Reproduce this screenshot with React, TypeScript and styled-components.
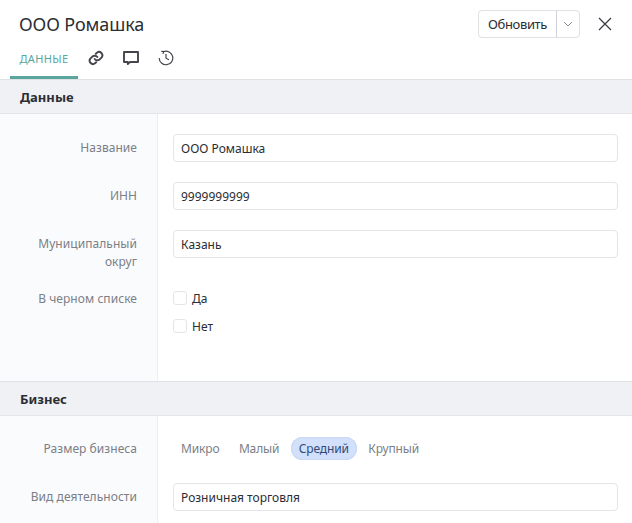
import styled, { createGlobalStyle } from "styled-components"

const Global = createGlobalStyle`
  html, body {
    margin: 0;
    padding: 0;
    background: #fff;
    overflow: hidden;
    font-family: "Noto Sans", sans-serif;
    font-size: 13px;
    color: #2b2d33;
  }
`

const Page = styled.div`
  width: 632px;
  height: 523px;
  overflow: hidden;
`

const Header = styled.header`
  height: 79px;
  display: flex;
  flex-direction: column;
  border-bottom: 1px solid #dfe1e5;
`

const TitleRow = styled.div`
  height: 44px;
  padding: 4px 20px 0 20px;
  box-sizing: border-box;
  display: flex;
  align-items: center;
  justify-content: space-between;
`

const Title = styled.h1`
  margin: 0 0 0 -1px;
  font-size: 18px;
  font-weight: 400;
  letter-spacing: -0.1px;
  color: #2b2d33;
`

const Actions = styled.div`
  display: flex;
  align-items: center;
  gap: 18px;
`

const SplitButton = styled.div`
  display: flex;
  height: 28px;
  border: 1px solid #dfe1e5;
  border-radius: 4px;
  box-sizing: border-box;
`

const MainButton = styled.div`
  width: 77px;
  display: flex;
  align-items: center;
  justify-content: center;
  font-size: 13px;
  letter-spacing: -0.35px;
  color: #2b2d33;
  border-right: 1px solid #cfd2d6;
`

const CaretButton = styled.div`
  width: 22px;
  display: flex;
  align-items: center;
  justify-content: center;
`

const Tabs = styled.nav`
  flex: 1;
  display: flex;
  align-items: flex-start;
`

const TextTab = styled.div`
  width: 68px;
  height: 35px;
  margin-left: 10px;
  padding-bottom: 4px;
  border-bottom: 3px solid #5aa69f;
  box-sizing: border-box;
  display: flex;
  align-items: center;
  justify-content: center;
  font-size: 11px;
  letter-spacing: 0.4px;
  color: #5aa69f;
`

const IconTab = styled.div`
  width: 35px;
  height: 28px;
  display: flex;
  align-items: center;
  justify-content: center;
  color: #44464c;
`

const SectionHeader = styled.h2<{ $ruled?: boolean }>`
  margin: 0;
  height: ${(p) => (p.$ruled ? 35 : 34)}px;
  padding-left: 20px;
  display: flex;
  align-items: center;
  background: #f0f1f5;
  border-top: ${(p) => (p.$ruled ? "1px solid #dfe1e5" : "none")};
  border-bottom: 1px solid #e3e5e9;
  box-sizing: border-box;
  font-size: 13px;
  font-weight: 700;
  color: #2b2d33;
`

const Section = styled.section<{ $height: number }>`
  height: ${(p) => p.$height}px;
  display: grid;
  grid-template-columns: 158px 1fr;
  overflow: hidden;
`

const Labels = styled.div<{ $top: number }>`
  background: #fafbfd;
  border-right: 1px solid #eceef1;
  padding-top: ${(p) => p.$top}px;
  box-sizing: border-box;
`

const Fields = styled.div<{ $top: number }>`
  padding: ${(p) => p.$top}px 14px 0 15px;
  box-sizing: border-box;
`

const Label = styled.div<{ $height: number }>`
  height: ${(p) => p.$height}px;
  padding-right: 20px;
  text-align: right;
  font-size: 12px;
  line-height: 18px;
  letter-spacing: 0.05px;
  color: #7b7f86;
`

const Input = styled.div<{ $mb?: number }>`
  height: 28px;
  margin-bottom: ${(p) => p.$mb ?? 20}px;
  padding-left: 7px;
  display: flex;
  align-items: center;
  border: 1px solid #e3e5e9;
  border-radius: 4px;
  box-sizing: border-box;
  font-size: 12px;
  color: #2b2d33;
`

const CheckRow = styled.div`
  height: 14px;
  margin-bottom: 14px;
  display: flex;
  align-items: center;
  gap: 5px;
  font-size: 12px;
  color: #2b2d33;
`

const Box = styled.span`
  width: 14px;
  height: 14px;
  border: 1px solid #e3e5e9;
  border-radius: 3px;
  box-sizing: border-box;
`

const Segments = styled.div`
  height: 24px;
  margin-bottom: 23px;
  display: flex;
  align-items: center;
  gap: 3.5px;
`

const Segment = styled.div<{ $active?: boolean }>`
  height: 23px;
  padding: 0 8px;
  display: flex;
  align-items: center;
  border-radius: 12px;
  font-size: 12px;
  letter-spacing: -0.15px;
  color: ${(p) => (p.$active ? "#2f4a7a" : "#7b7f86")};
  background: ${(p) => (p.$active ? "#d2e0fb" : "transparent")};
  box-shadow: ${(p) => (p.$active ? "inset 0 0 0 1px #c8d8f5" : "none")};
`

const App = () => {
  return (
    <Page>
      <Global />
      <Header>
        <TitleRow>
          <Title>ООО Ромашка</Title>
          <Actions>
            <SplitButton>
              <MainButton>Обновить</MainButton>
              <CaretButton>
                <svg width="10" height="6" viewBox="0 0 10 6" fill="none" stroke="#8a8d93" strokeWidth="1">
                  <path d="M1 1l4 4 4-4" />
                </svg>
              </CaretButton>
            </SplitButton>
            <svg width="14" height="14" viewBox="0 0 14 14" fill="none" stroke="#3a3d44" strokeWidth="1.3">
              <path d="M1 1l12 12M13 1L1 13" />
            </svg>
          </Actions>
        </TitleRow>
        <Tabs>
          <TextTab>ДАННЫЕ</TextTab>
          <IconTab>
            <svg width="16" height="16" viewBox="0 0 24 24" fill="none" stroke="currentColor" strokeWidth="2.9" strokeLinecap="round">
              <path d="M10 13.5a5 5 0 0 0 7.5.5l3-3a5 5 0 0 0-7-7l-1.7 1.7" />
              <path d="M14 10.5a5 5 0 0 0-7.5-.5l-3 3a5 5 0 0 0 7 7l1.7-1.7" />
            </svg>
          </IconTab>
          <IconTab>
            <svg width="16" height="16" viewBox="0 0 16 16" fill="none" stroke="currentColor" strokeWidth="1.9">
              <path d="M1 2h14v10H7l-2.2 2v-2H1z" strokeLinejoin="round" />
            </svg>
          </IconTab>
          <IconTab>
            <svg width="16" height="16" viewBox="0 0 16 16" fill="none" stroke="currentColor" strokeWidth="1.2">
              <path d="M5.6 1.6A6.8 6.8 0 1 1 1.2 8" />
              <path d="M8 4v4.2l3 1.6" />
              <path d="M3.2 1.4l2.6.1-.9 2.4" />
            </svg>
          </IconTab>
        </Tabs>
      </Header>

      <SectionHeader>Данные</SectionHeader>
      <Section $height={267}>
        <Labels $top={25}>
          <Label $height={48}>Название</Label>
          <Label $height={48}>ИНН</Label>
          <Label $height={55}>Муниципальный<br />округ</Label>
          <Label $height={40}>В черном списке</Label>
        </Labels>
        <Fields $top={20}>
          <Input>ООО Ромашка</Input>
          <Input>9999999999</Input>
          <Input $mb={33}>Казань</Input>
          <CheckRow><Box />Да</CheckRow>
          <CheckRow><Box />Нет</CheckRow>
        </Fields>
      </Section>

      <SectionHeader $ruled>Бизнес</SectionHeader>
      <Section $height={108}>
        <Labels $top={24}>
          <Label $height={48}>Размер бизнеса</Label>
          <Label $height={30}>Вид деятельности</Label>
        </Labels>
        <Fields $top={20}>
          <Segments>
            <Segment>Микро</Segment>
            <Segment>Малый</Segment>
            <Segment $active>Средний</Segment>
            <Segment>Крупный</Segment>
          </Segments>
          <Input>Розничная торговля</Input>
        </Fields>
      </Section>
    </Page>
  )
}

export default App
